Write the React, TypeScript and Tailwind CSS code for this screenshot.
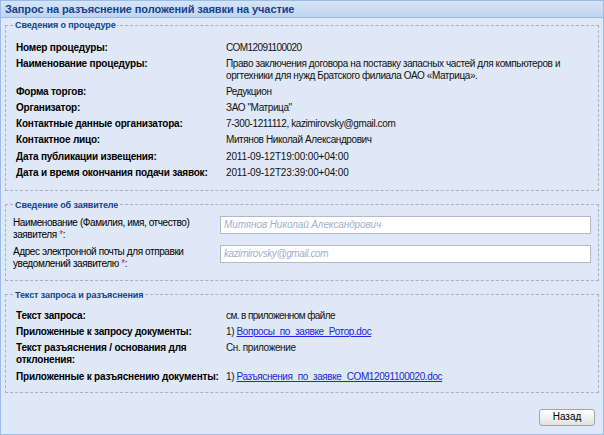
import React from "react";

const font = { fontFamily: '"Liberation Sans", Arial, sans-serif' };

function Row({
  label,
  children,
  vt = "tracking-[-0.4px]",
}: {
  label: React.ReactNode;
  children: React.ReactNode;
  vt?: string;
}) {
  return (
    <>
      <div className="font-bold text-black tracking-[-0.2px]">{label}</div>
      <div className={"text-[#111] " + vt}>{children}</div>
    </>
  );
}

function Legend({ children, cls }: { children: React.ReactNode; cls: string }) {
  return (
    <legend className={"px-[1px] text-[9px] font-bold text-[#15428b] tracking-[-0.1px] " + cls}>
      {children}
    </legend>
  );
}

export default function App() {
  return (
    <div
      className="w-[604px] h-[435px] bg-[#dfe8f6] border border-[#99bbe8] flex flex-col text-[10px] leading-[12px] overflow-hidden"
      style={font}
    >
      <div className="h-[17px] shrink-0 border-b border-[#99bbe8] bg-gradient-to-b from-[#d6e4f6] to-[#c0d4f0] flex items-center pl-[4px] text-[11px] font-bold text-[#15428b] tracking-[-0.1px]">
        Запрос на разъяснение положений заявки на участие
      </div>

      <div className="px-[4px] flex flex-col">
        <fieldset className="mt-[1px] border border-dashed border-[#aab0c6] pl-[10px] pr-[10px] pt-[11px] pb-[11px]">
          <Legend cls="-ml-[2px]">Сведения о процедуре</Legend>
          <div className="grid grid-cols-[210px_1fr] gap-y-[4.1px]">
            <Row label="Номер процедуры:" vt="tracking-[-0.6px]">COM12091100020</Row>
            <Row label="Наименование процедуры:">
              Право заключения договора на поставку запасных частей для компьютеров и
              <br />
              оргтехники для нужд Братского филиала ОАО «Матрица».
            </Row>
            <Row label="Форма торгов:">Редукцион</Row>
            <Row label="Организатор:">ЗАО "Матрица"</Row>
            <Row label="Контактные данные организатора:">7-300-1211112, kazimirovsky@gmail.com</Row>
            <Row label="Контактное лицо:">Митянов Николай Александрович</Row>
            <Row label="Дата публикации извещения:" vt="tracking-[-0.15px]">
              2011-09-12T19:00:00+04:00
            </Row>
            <Row label="Дата и время окончания подачи заявок:" vt="tracking-[-0.15px]">
              2011-09-12T23:39:00+04:00
            </Row>
          </div>
        </fieldset>

        <fieldset className="mt-[8px] border border-dashed border-[#aab0c6] pl-[7px] pr-[7px] pt-[5px] pb-[10px]">
          <Legend cls="ml-[1px]">Сведение об заявителе</Legend>
          <div className="flex flex-col gap-[4px]">
            <div className="flex items-start">
              <div className="w-[207px] shrink-0 pt-[1px] text-black tracking-[-0.4px]">
                Наименование (Фамилия, имя, отчество)
                <br />
                заявителя <span className="text-[#e0203a]">*</span>:
              </div>
              <div className="flex-1 h-[18px] bg-white border border-[#b5b8c8] flex items-center px-[3px] italic text-[#a0b0d0] tracking-[-0.1px]">
                Митянов Николай Александрович
              </div>
            </div>
            <div className="flex items-start">
              <div className="w-[207px] shrink-0 pt-[1px] text-black tracking-[-0.4px]">
                Адрес электронной почты для отправки
                <br />
                уведомлений заявителю <span className="text-[#e0203a]">*</span>:
              </div>
              <div className="flex-1 h-[18px] bg-white border border-[#b5b8c8] flex items-center px-[3px] italic text-[#a0b0d0] tracking-[-0.4px]">
                kazimirovsky@gmail.com
              </div>
            </div>
          </div>
        </fieldset>

        <fieldset className="mt-[8px] border border-dashed border-[#aab0c6] pl-[10px] pr-[10px] pt-[9px] pb-[9px]">
          <Legend cls="-ml-[2px]">Текст запроса и разъяснения</Legend>
          <div className="grid grid-cols-[210px_1fr] gap-y-[4.3px]">
            <Row label="Текст запроса:" vt="tracking-[-0.6px]">см. в приложенном файле</Row>
            <Row label="Приложенные к запросу документы:">
              1) <span className="underline text-[#2424e8]">Вопросы_по_заявке_Ротор.doc</span>
            </Row>
            <Row
              label={
                <>
                  Текст разъяснения / основания для
                  <br />
                  отклонения:
                </>
              }
            >
              Сн. приложение
            </Row>
            <Row label="Приложенные к разъяснению документы:">
              1) <span className="underline text-[#2424e8]">Разъяснения_по_заявке_COM12091100020.doc</span>
            </Row>
          </div>
        </fieldset>

        <div className="flex justify-end pt-[16px] pr-[4px]">
          <button className="w-[56px] h-[17px] rounded-[3px] border border-[#a3a3a3] bg-gradient-to-b from-[#ffffff] to-[#e2e2e2] text-[10px] text-black flex items-center justify-center">
            Назад
          </button>
        </div>
      </div>
    </div>
  );
}
